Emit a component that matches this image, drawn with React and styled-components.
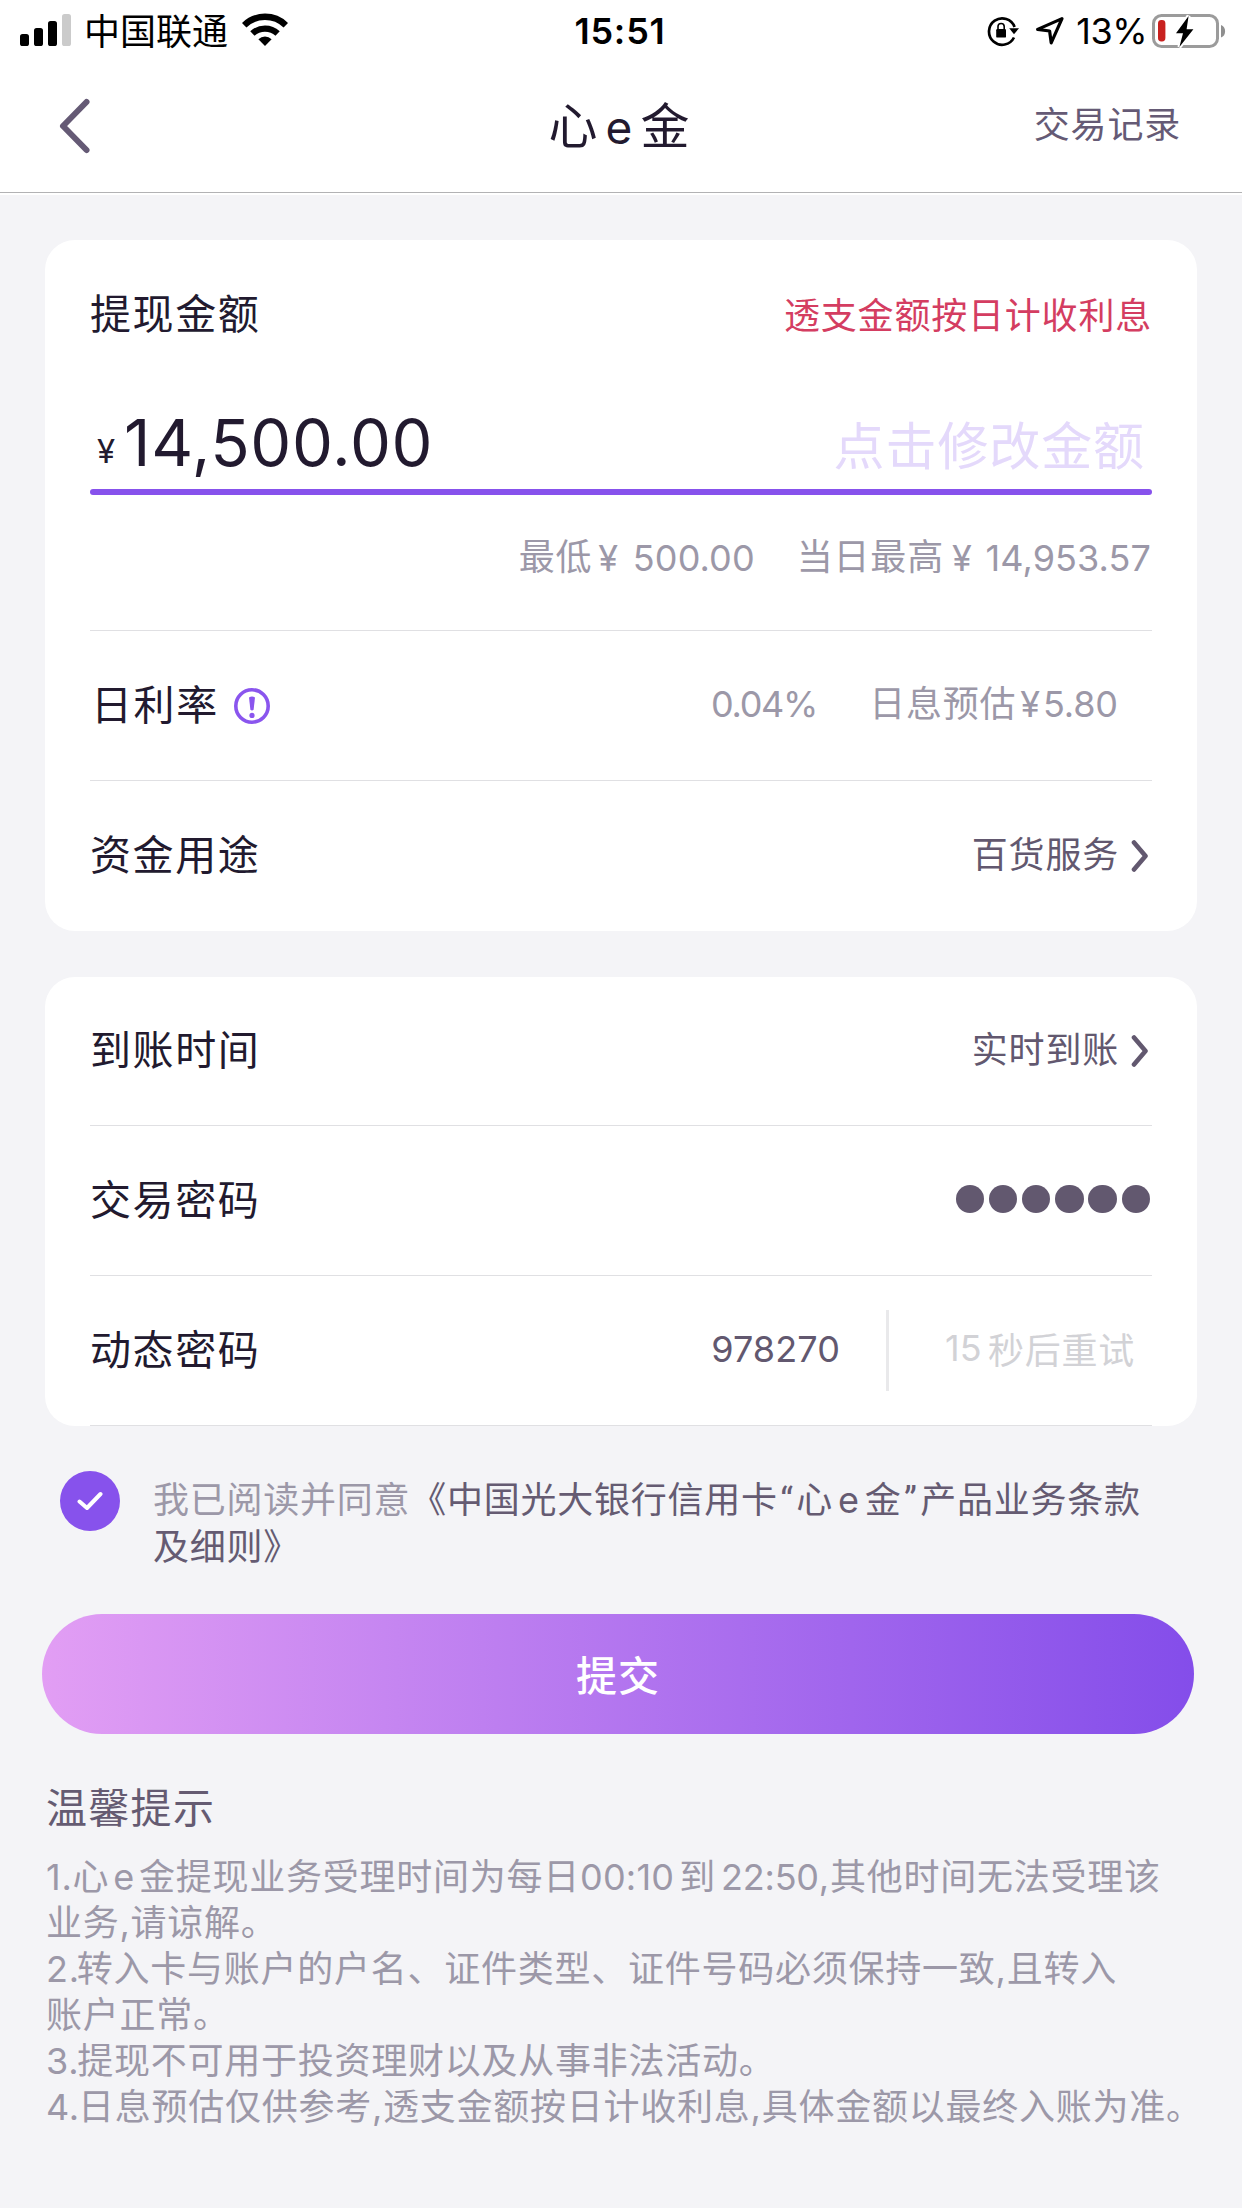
import React from 'react'
import styled, { createGlobalStyle } from 'styled-components'

const notes = [
  {
    no: '1.',
    first: (
      <>
        心<Latin $side={4}>e</Latin>金提现业务受理时间为每日<Num $ls={0.2}>00:10</Num>
        <Gap $w={5} />到<Gap $w={5} />
        <Num $ls={-0.2}>22:50</Num>,其他时间无法受理该
      </>
    ),
    rest: '业务,请谅解。',
  },
  { no: '2.', pull: 3, first: '转入卡与账户的户名、证件类型、证件号码必须保持一致,且转入', rest: '账户正常。' },
  { no: '3.', pull: 2, first: '提现不可用于投资理财以及从事非法活动。' },
  { no: '4.', pull: 2, first: '日息预估仅供参考,透支金额按日计收利息,具体金额以最终入账为准。' },
]

function Latin({ children, $side }) {
  return <LatinText $side={$side}>{children}</LatinText>
}

function Num({ children, $ls }) {
  return <NumText $ls={$ls}>{children}</NumText>
}

function Gap({ $w }) {
  return <GapBox $w={$w} />
}

const Chevron = () => (
  <ChevronIcon viewBox="0 0 18 34">
    <path d="M3 3.5 L14.5 17 L3 30.5" />
  </ChevronIcon>
)

const StatusIcons = () => (
  <>
    <svg width="34" height="32" viewBox="0 0 34 32">
      <path d="M28 22.5 A13.2 13.2 0 1 1 28.6 12" fill="none" stroke="#000" strokeWidth="2.7" />
      <path d="M23.2 13.2 H33 L28 19.2 Z" fill="#000" />
      <rect x="10.2" y="14" width="9.8" height="8.6" rx="1.2" fill="#000" />
      <path d="M12 14.5 V11.6 A3.1 3.1 0 0 1 18.2 11.6 V14.5" fill="none" stroke="#000" strokeWidth="1.6" />
    </svg>
    <NavArrow viewBox="0 0 32 32">
      <path d="M28 3.6 L3.6 14.4 L15.6 16 L17.2 27.8 Z" />
    </NavArrow>
    <Percent>13%</Percent>
    <svg width="76" height="40" viewBox="0 0 76 40">
      <rect x="1.5" y="4.5" width="64" height="31" rx="8" fill="none" stroke="#9b9b9b" strokeWidth="3" />
      <path d="M69 14 C74.5 15.5 74.5 25 69 26.5 Z" fill="#8f8f8f" />
      <rect x="6" y="9" width="7.4" height="21.5" rx="3.4" fill="#c8211f" />
      <path d="M36.6 5 L24 22.2 H31 L27.4 36 L41.4 18.2 H34.6 Z" fill="#000" stroke="#fff" strokeWidth="4" paintOrder="stroke" />
    </svg>
  </>
)

const App = () => {
  const [agreed, setAgreed] = React.useState(true)

  return (
    <>
      <GlobalStyle />
      <Page>
        <StatusBar>
          <StatusLeft>
            <svg width="51" height="32" viewBox="0 0 51 32">
              <rect x="0" y="20" width="9" height="12" rx="2.6" />
              <rect x="14" y="14" width="9" height="18" rx="2.6" />
              <rect x="28" y="7" width="9" height="25" rx="2.6" />
              <rect x="42" y="0" width="9" height="32" rx="2.6" fill="#cbcbcb" />
            </svg>
            <Carrier>中国联通</Carrier>
            <svg width="46" height="34" viewBox="0 0 46 34">
              <path d="M2.2 12.2 A30 30 0 0 1 43.8 12.2" fill="none" stroke="#000" strokeWidth="6.4" />
              <path d="M10.4 20.6 A18.2 18.2 0 0 1 35.6 20.6" fill="none" stroke="#000" strokeWidth="6.2" />
              <path d="M16.4 26.2 A9.6 9.6 0 0 1 29.6 26.2 L23 33 Z" />
            </svg>
          </StatusLeft>
          <Clock>15:51</Clock>
          <StatusRight>
            <StatusIcons />
          </StatusRight>
        </StatusBar>

        <NavBar>
          <BackButton>
            <svg width="36" height="60" viewBox="0 0 36 60">
              <path d="M29.5 5 L6 29 L29.5 53" fill="none" stroke="#655a75" strokeWidth="6" strokeLinecap="round" strokeLinejoin="round" />
            </svg>
          </BackButton>
          <Title>
            心<span>e</span>金
          </Title>
          <HistoryLink>交易记录</HistoryLink>
        </NavBar>

        <Card>
          <CardHead>
            <Label>提现金额</Label>
            <Warning>透支金额按日计收利息</Warning>
          </CardHead>
          <AmountRow>
            <Currency>¥</Currency>
            <Amount>14,500.00</Amount>
            <EditHint>点击修改金额</EditHint>
          </AmountRow>
          <Underline />
          <Limits>
            <LimitName>最低</LimitName>
            <Yuan $left={6} $right={14}>¥</Yuan>
            <Num $ls={0.1}>500.00</Num>
            <Gap $w={42} />
            <LimitName>当日最高</LimitName>
            <Yuan $left={8} $right={13}>¥</Yuan>
            <Num $ls={0.1}>14,953.57</Num>
          </Limits>
          <Row $line>
            <Label $indent={1}>日利率</Label>
            <InfoIcon viewBox="0 0 36 36">
              <circle cx="18" cy="18" r="16.2" fill="none" stroke="#8a55ee" strokeWidth="3.6" />
              <path d="M15 9.4 Q18 7.4 21 9.4 L19.6 21.8 Q18 23.4 16.4 21.8 Z" fill="#8a55ee" />
              <circle cx="18" cy="27.4" r="2.6" fill="#8a55ee" />
            </InfoIcon>
            <Value $muted $end={34}>
              <Num $ls={-1.3}>0.04%</Num>
              <Gap $w={52} />
              <span>日息预估</span>
              <Yuan $left={4} $right={2}>¥</Yuan>
              <Num $ls={-0.1}>5.80</Num>
            </Value>
          </Row>
          <Row $line $tall>
            <Label>资金用途</Label>
            <Value $end={12}>百货服务</Value>
            <Chevron />
          </Row>
        </Card>

        <Card $second>
          <Row $first>
            <Label>到账时间</Label>
            <Value $end={12}>实时到账</Value>
            <Chevron />
          </Row>
          <Row $line>
            <Label>交易密码</Label>
            <Dots>
              {[0, 1, 2, 3, 4, 5].map((n) => (
                <Dot key={n} />
              ))}
            </Dots>
          </Row>
          <Row $line $tall $last>
            <Label>动态密码</Label>
            <Code>978270</Code>
            <Retry>
              <Num $ls={0.2}>15</Num>
              <Gap $w={6} />
              秒后重试
            </Retry>
          </Row>
        </Card>

        <Agreement>
          <CheckCircle onClick={() => setAgreed(!agreed)}>
            {agreed && (
              <svg width="26" height="20" viewBox="0 0 26 20">
                <path d="M2.5 10.5 L10 17 L23.5 3" fill="none" stroke="#fff" strokeWidth="4" strokeLinecap="round" strokeLinejoin="round" />
              </svg>
            )}
          </CheckCircle>
          <AgreeText>
            我已阅读并同意
            <strong>
              《中国光大银行信用卡<Quote>“</Quote>心<Latin $side={5}>e</Latin>金<Quote>”</Quote>产品业务条款
              <br />
              及细则》
            </strong>
          </AgreeText>
        </Agreement>

        <Submit>提交</Submit>

        <Tips>
          <h2>温馨提示</h2>
          {notes.map((note) => (
            <p key={note.no}>
              <NoteNo $pull={note.pull}>{note.no}</NoteNo>
              {note.first}
              {note.rest && <br />}
              {note.rest}
            </p>
          ))}
        </Tips>
      </Page>
    </>
  )
}

const GlobalStyle = createGlobalStyle`
  * {
    box-sizing: border-box;
  }
  body {
    margin: 0;
    background-color: #f4f4f7;
    font-family: Inter, 'Noto Sans CJK SC', sans-serif;
  }
  button {
    border: 0;
    padding: 0;
    background: none;
    font-family: inherit;
  }
`

const Page = styled.div`
  width: 1242px;
  height: 2208px;
  display: flex;
  flex-direction: column;
  overflow: hidden;
  background-color: #f4f4f7;
  color: #221a2f;
  white-space: nowrap;
`

const StatusBar = styled.header`
  height: 60px;
  display: grid;
  grid-template-columns: 1fr auto 1fr;
  align-items: center;
  padding: 2px 14px 0 20px;
  background-color: #fff;
  color: #000;
`

const StatusLeft = styled.div`
  display: flex;
  align-items: center;
  padding-bottom: 2px;
`

const Carrier = styled.span`
  padding: 4px 14px 0 13px;
  font-size: 36px;
  line-height: 40px;
`

const Clock = styled.span`
  margin-right: 8px;
  font-size: 36px;
  font-weight: 600;
  letter-spacing: 0.8px;
  line-height: 40px;
`

const StatusRight = styled.div`
  display: flex;
  align-items: center;
  justify-content: flex-end;
`

const NavArrow = styled.svg`
  width: 32px;
  height: 32px;
  margin: 0 10px 0 14px;
  path {
    fill: none;
    stroke: #000;
    stroke-width: 3.2;
    stroke-linejoin: round;
  }
`

const Percent = styled.span`
  padding-right: 5px;
  font-size: 36px;
  letter-spacing: -0.5px;
`

const NavBar = styled.nav`
  height: 135px;
  display: grid;
  grid-template-columns: 1fr auto 1fr;
  align-items: center;
  padding: 0 61px 2px 57px;
  background-color: #fff;
  background-image: linear-gradient(#b2b2b4, #b2b2b4);
  background-repeat: no-repeat;
  background-size: 100% 1px;
  background-position: 0 132px;
`

const BackButton = styled.button`
  height: 60px;
  text-align: left;
`

const Title = styled.h1`
  margin: 0;
  font-size: 49px;
  font-weight: 400;
  line-height: 60px;
  span {
    margin: 0 8px;
    font-size: 46px;
  }
`

const HistoryLink = styled.a`
  justify-self: end;
  padding-bottom: 3px;
  color: #655a75;
  font-size: 36px;
  letter-spacing: 0.8px;
  line-height: 50px;
`

const Card = styled.section`
  margin: ${(props) => (props.$second ? '46px' : '45px')} 45px 0;
  padding: 0 45px;
  border-radius: 30px;
  background-color: #fff;
`

const CardHead = styled.div`
  height: 146px;
  display: flex;
  align-items: center;
  justify-content: space-between;
  & > :first-child {
    padding-bottom: 0;
    padding-top: 1px;
  }
`

const Label = styled.span`
  padding: 0 0 2px ${(props) => props.$indent || 0}px;
  font-size: 41px;
  letter-spacing: 1.6px;
  line-height: 50px;
`

const Warning = styled.span`
  color: #d43d61;
  font-size: 36px;
  letter-spacing: 0.8px;
`

const AmountRow = styled.div`
  height: 103px;
  display: flex;
  align-items: center;
  padding: 10px 7px 0 7px;
`

const Currency = styled.span`
  width: 27px;
  padding-top: 16px;
  font-size: 33px;
  line-height: 40px;
`

const Amount = styled.span`
  flex: 1;
  font-size: 65px;
  letter-spacing: 0.7px;
  line-height: 80px;
`

const EditHint = styled.span`
  padding-top: 8px;
  color: #e4d9fb;
  font-size: 51px;
  letter-spacing: 0.9px;
  line-height: 60px;
`

const Underline = styled.div`
  height: 6px;
  border-radius: 3px;
  background-color: #8752ec;
`

const Limits = styled.div`
  height: 135px;
  display: flex;
  align-items: center;
  justify-content: flex-end;
  padding: 0 1px 9px 0;
  color: #9c98a8;
  font-size: 36px;
  letter-spacing: 0.8px;
  line-height: 50px;
`

const LimitName = styled.span`
  padding-bottom: 2px;
`

const Yuan = styled.span`
  margin-left: ${(props) => props.$left}px;
  margin-right: ${(props) => props.$right}px;
`

const Row = styled.div`
  height: ${(props) => (props.$first ? 148 : props.$tall ? 151 : 150)}px;
  display: flex;
  align-items: center;
  border-top: ${(props) => (props.$line ? '1px solid #e0e0e3' : '0')};
  border-bottom: ${(props) => (props.$last ? '1px solid #e0e0e3' : '0')};
`

const InfoIcon = styled.svg`
  width: 36px;
  height: 36px;
  margin-left: 15px;
`

const Value = styled.span`
  display: flex;
  align-items: center;
  margin-left: auto;
  padding: 0 ${(props) => props.$end}px 3px 0;
  color: ${(props) => (props.$muted ? '#9c98a8' : '#62586f')};
  font-size: 36px;
  letter-spacing: 0.8px;
  line-height: 50px;
`

const ChevronIcon = styled.svg`
  width: 18px;
  height: 34px;
  margin-right: 3px;
  path {
    fill: none;
    stroke: #62586f;
    stroke-width: 4.6;
    stroke-linecap: round;
    stroke-linejoin: round;
  }
`

const Dots = styled.div`
  display: flex;
  gap: 4.7px;
  margin-left: auto;
  padding: 0 2px 3px 0;
`

const Dot = styled.i`
  width: 28.5px;
  height: 28.5px;
  border-radius: 50%;
  background-color: #62586f;
`

const Code = styled.span`
  margin-left: auto;
  padding: 0 46px 3px 0;
  color: #62586f;
  font-size: 36px;
  letter-spacing: 0.1px;
`

const Retry = styled.div`
  width: 266px;
  height: 81px;
  display: flex;
  align-items: center;
  padding: 0 0 5px 56px;
  border-left: 3px solid #e9e9eb;
  color: #d2d2d6;
  font-size: 36px;
  letter-spacing: 0.8px;
`

const Agreement = styled.div`
  display: flex;
  padding: 45px 0 0 60px;
`

const CheckCircle = styled.button`
  width: 60px;
  height: 60px;
  display: flex;
  align-items: center;
  justify-content: center;
  border-radius: 50%;
  background-color: #8752ec;
`

const AgreeText = styled.p`
  margin: 6px 0 0 33px;
  color: #9c98a8;
  font-size: 36px;
  letter-spacing: 0.75px;
  line-height: 46px;
  strong {
    color: #655b72;
    font-weight: 400;
  }
`

const Quote = styled.span`
  margin: 0 2.5px;
  font-family: Roboto, sans-serif;
`

const LatinText = styled.span`
  margin: 0 ${(props) => props.$side}px;
`

const NumText = styled.span`
  letter-spacing: ${(props) => props.$ls ?? -0.6}px;
`

const GapBox = styled.span`
  display: inline-block;
  width: ${(props) => props.$w}px;
`

const Submit = styled.button`
  width: 1152px;
  height: 120px;
  margin: 44px 0 0 42px;
  padding-bottom: 3px;
  border-radius: 60px;
  background-image: linear-gradient(90deg, #e29ef4, #844dea);
  color: #fff;
  font-size: 41px;
  font-weight: 500;
  letter-spacing: 1px;
`

const Tips = styled.footer`
  padding: 49px 0 0 46px;
  color: #9c98a8;
  font-size: 36px;
  letter-spacing: 0.75px;
  line-height: 46px;
  h2 {
    margin: 0 0 21px;
    color: #655b72;
    font-size: 41px;
    font-weight: 400;
    letter-spacing: 1.3px;
    line-height: 50px;
  }
  p {
    margin: 0;
  }
`

const NoteNo = styled.span`
  margin-right: -${(props) => props.$pull || 0}px;
`

export default App
